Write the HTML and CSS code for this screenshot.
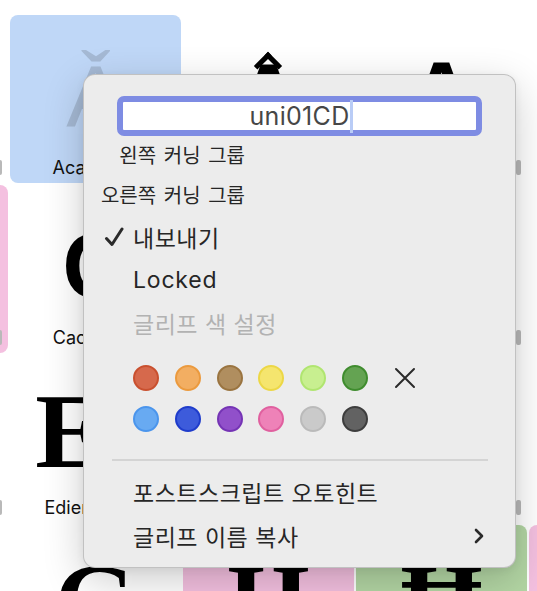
FILE: index.html
```html
<!DOCTYPE html>
<html lang="ko">
<head>
<meta charset="utf-8">
<title>Glyph context menu</title>
<link rel="stylesheet" href="styles.css">
</head>
<body>
<div class="canvas">
  <div class="grid">
    <!-- row 0 -->
    <div class="cell"><div class="glyph"></div><div class="label"></div><span class="mark"></span></div>
    <div class="cell cell-selected"><div class="glyph"><span class="g g-faded">Ǎ</span></div><div class="label">Acaron.sc</div><span class="mark"></span></div>
    <div class="cell"><div class="glyph"><span class="g g-bold g-acirc">A<span class="circ"></span></span></div><div class="label"></div><span class="mark"></span></div>
    <div class="cell"><div class="glyph"><span class="g g-bold g-tall">A</span></div><div class="label"></div><span class="mark"></span></div>
    <div class="cell"><div class="glyph"></div><div class="label"></div><span class="mark"></span></div>
    <!-- row 1 -->
    <div class="cell cell-pink"><div class="glyph"></div><div class="label"></div><span class="mark"></span></div>
    <div class="cell"><div class="glyph"><span class="g g-bold">C</span></div><div class="label">Cacute.sc</div><span class="mark"></span></div>
    <div class="cell"><div class="glyph"></div><div class="label"></div><span class="mark"></span></div>
    <div class="cell"><div class="glyph"></div><div class="label"></div><span class="mark"></span></div>
    <div class="cell"><div class="glyph"></div><div class="label"></div><span class="mark"></span></div>
    <!-- row 2 -->
    <div class="cell"><div class="glyph"></div><div class="label"></div><span class="mark"></span></div>
    <div class="cell"><div class="glyph"><span class="g g-serif g-shift">E</span></div><div class="label">Edieresis.sc</div><span class="mark"></span></div>
    <div class="cell"><div class="glyph"></div><div class="label"></div><span class="mark"></span></div>
    <div class="cell"><div class="glyph"></div><div class="label"></div><span class="mark"></span></div>
    <div class="cell"><div class="glyph"></div><div class="label"></div><span class="mark"></span></div>
    <!-- row 3 -->
    <div class="cell"><div class="glyph"></div><div class="label"></div></div>
    <div class="cell"><div class="glyph"><span class="g g-serif">G</span></div><div class="label"></div></div>
    <div class="cell cell-pink"><div class="glyph"><span class="g g-serif">H</span></div><div class="label"></div></div>
    <div class="cell cell-green"><div class="glyph"><span class="g g-serif">Ħ</span></div><div class="label"></div></div>
    <div class="cell cell-pink"><div class="glyph"></div><div class="label"></div></div>
  </div>

  <div class="menu">
    <div class="field-wrap">
      <div class="field"><span class="field-text">uni01CD</span><span class="caret"></span></div>
    </div>
    <div class="krow"><span class="klabel">왼쪽 커닝 그룹</span></div>
    <div class="krow"><span class="klabel">오른쪽 커닝 그룹</span></div>

    <div class="item"><span class="lead"><svg class="check" width="20" height="20" viewBox="0 0 20 20"><path d="M2.5 11.5 L8 17.5 L18 2" fill="none" stroke="#2a2a2a" stroke-width="3" stroke-linecap="round" stroke-linejoin="round"/></svg></span><span class="item-text">내보내기</span></div>
    <div class="item"><span class="lead"></span><span class="item-text item-latin">Locked</span></div>
    <div class="item item-disabled"><span class="lead"></span><span class="item-text">글리프 색 설정</span></div>

    <div class="colors">
      <div class="color-row">
        <span class="dot dot-red"></span>
        <span class="dot dot-orange"></span>
        <span class="dot dot-tan"></span>
        <span class="dot dot-yellow"></span>
        <span class="dot dot-lime"></span>
        <span class="dot dot-green"></span>
        <svg class="clear" width="22" height="22" viewBox="0 0 22 22"><path d="M2 2 L20 20 M20 2 L2 20" stroke="#2a2a2a" stroke-width="2" stroke-linecap="round"/></svg>
      </div>
      <div class="color-row">
        <span class="dot dot-sky"></span>
        <span class="dot dot-blue"></span>
        <span class="dot dot-purple"></span>
        <span class="dot dot-pink"></span>
        <span class="dot dot-lgray"></span>
        <span class="dot dot-dgray"></span>
      </div>
    </div>

    <div class="sep"></div>

    <div class="item item-tall"><span class="lead"></span><span class="item-text">포스트스크립트 오토힌트</span></div>
    <div class="item item-tall"><span class="lead"></span><span class="item-text">글리프 이름 복사</span>
      <svg class="chev" width="12" height="16" viewBox="0 0 12 16"><path d="M3 2 L9 8 L3 14" fill="none" stroke="#2a2a2a" stroke-width="2.6" stroke-linecap="round" stroke-linejoin="round"/></svg>
    </div>
  </div>
</div>
</body>
</html>
```

FILE: styles.css
```css
* { box-sizing: border-box; }

html, body {
  margin: 0;
  padding: 0;
  background: #ffffff;
}

body {
  width: 537px;
  height: 591px;
  overflow: hidden;
  font-family: "Inter", "Noto Sans CJK KR", sans-serif;
}

.canvas {
  position: relative;
  width: 537px;
  height: 591px;
  overflow: hidden;
}

/* glyph grid */
.grid {
  display: grid;
  grid-template-columns: repeat(5, 171px);
  grid-auto-rows: 168px;
  gap: 2px;
  margin: 15px 0 0 -163px;
  width: max-content;
}

.cell {
  position: relative;
  border-radius: 8px;
  background: #ffffff;
  display: flex;
  flex-direction: column;
  overflow: hidden;
}

.cell-selected { background: #bfd7f7; }
.cell-pink { background: #f4c0e0; }
.cell-green { background: #b3d6a4; }

.glyph {
  height: 143px;
  text-align: center;
  color: #000;
}

.g {
  display: inline-block;
  line-height: 1;
}

.g-faded {
  font-family: "Liberation Sans", sans-serif;
  font-size: 88px;
  color: #a5b9d4;
  margin-top: 38px;
}

.g-bold {
  font-family: "Liberation Sans", sans-serif;
  font-weight: 700;
  font-size: 92px;
  margin-top: 35px;
}

.g-tall { margin-top: 33px; }

.g-acirc { position: relative; }

/* circumflex sitting right on the apex */
.circ {
  position: absolute;
  left: 50%;
  top: 6px;
  width: 20px;
  height: 20px;
  margin-left: -10px;
  border-top: 5px solid #000;
  border-left: 5px solid #000;
  transform: rotate(45deg);
}

.g-serif {
  font-family: "Liberation Serif", serif;
  font-weight: 700;
  font-size: 106px;
  margin-top: 24px;
}

.g-shift { margin-right: 50px; }

.label {
  height: 20px;
  line-height: 20px;
  font-size: 18px;
  color: #111;
  text-align: center;
  white-space: nowrap;
}

.mark {
  position: absolute;
  right: 6px;
  bottom: 8px;
  width: 5px;
  height: 15px;
  border-radius: 2px;
  background: #b9b9b9;
}

/* context menu */
.menu {
  position: absolute;
  left: 83px;
  top: 74px;
  width: 433px;
  height: 494px;
  background: #ececec;
  border: 1px solid rgba(0, 0, 0, 0.18);
  border-radius: 12px;
  box-shadow: 0 12px 40px rgba(0, 0, 0, 0.2), 0 2px 8px rgba(0, 0, 0, 0.06);
  display: flex;
  flex-direction: column;
  padding: 21px 0 8px;
  color: #262626;
}

.field-wrap {
  padding: 0 33px;
}

.field {
  height: 40px;
  border: 6px solid #7e8ce3;
  border-radius: 7px;
  background: #ffffff;
  display: flex;
  align-items: center;
  justify-content: center;
  font-size: 25px;
  letter-spacing: 0.3px;
  color: #474747;
  padding-left: 4px;
}

.field-text { line-height: 1; }

.caret {
  width: 3px;
  height: 33px;
  margin-left: 1px;
  background: #b9ccf6;
}

.krow {
  height: 40px;
  display: flex;
  align-items: center;
  padding-bottom: 3px;
}

.klabel {
  width: 161px;
  text-align: right;
  font-size: 20px;
  word-spacing: 2px;
  white-space: nowrap;
}

.item {
  height: 43px;
  display: flex;
  align-items: center;
  padding-right: 30px;
  font-size: 23px;
  letter-spacing: 0.5px;
  padding-bottom: 2px;
}

.item-tall { height: 44px; }

.item-disabled { color: #b2b2b2; }

.lead {
  width: 49px;
  flex: none;
  display: flex;
  align-items: center;
  padding-left: 20px;
}

.item-text { white-space: nowrap; }

.item-latin { letter-spacing: 0.8px; }

.chev { margin-left: auto; }

.colors {
  display: flex;
  flex-direction: column;
  gap: 15px;
  padding: 20px 0 27px 49px;
}

.color-row {
  display: flex;
  align-items: center;
  gap: 15.8px;
}

.dot {
  width: 26px;
  height: 26px;
  border-radius: 50%;
  border: 2px solid;
  flex: none;
}

.dot-red    { background: #d6694c; border-color: #c9502f; }
.dot-orange { background: #f2ae62; border-color: #eb9a3e; }
.dot-tan    { background: #b08e5f; border-color: #9a7440; }
.dot-yellow { background: #f5e56e; border-color: #ecd746; }
.dot-lime   { background: #c8ef90; border-color: #b0e570; }
.dot-green  { background: #64a352; border-color: #3f8c2e; }
.dot-sky    { background: #68aaf2; border-color: #4b95ec; }
.dot-blue   { background: #3d5bdb; border-color: #1f3ccb; }
.dot-purple { background: #9150ca; border-color: #7534b5; }
.dot-pink   { background: #ee82b8; border-color: #e0609f; }
.dot-lgray  { background: #cacaca; border-color: #bababa; }
.dot-dgray  { background: #626262; border-color: #3d3d3d; }

.clear { margin-left: 10px; }

.sep {
  height: 2px;
  margin: 0 27px 10px 28px;
  background: #d4d4d4;
}
```
